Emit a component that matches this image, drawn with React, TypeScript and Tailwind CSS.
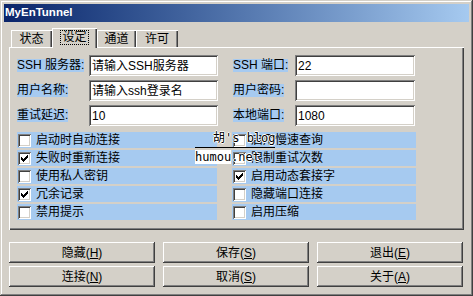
import React from "react";

const FONT = "font-['Liberation_Sans','Noto_Sans_CJK_SC',sans-serif]";
const RAISED =
  "shadow-[inset_-1px_-1px_#404040,inset_1px_1px_#ffffff,inset_-2px_-2px_#808080,inset_2px_2px_#d4d0c8]";
const SUNKEN =
  "shadow-[inset_1px_1px_#808080,inset_-1px_-1px_#ffffff,inset_2px_2px_#404040,inset_-2px_-2px_#d4d0c8]";

function Field({ label, value, labelW, inputW }: { label: string; value: string; labelW: string; inputW: string }) {
  return (
    <div className="flex items-center h-[21px]">
      <div className={`${labelW} flex items-center`}>
        <span className="bg-[#a6caf0] leading-[13px] text-[12px] text-black whitespace-nowrap">{label}</span>
      </div>
      <div className={`${inputW} h-[21px] bg-white ${SUNKEN} flex items-center pl-[3px] text-[12px] text-black whitespace-nowrap`}>
        {value}
      </div>
    </div>
  );
}

function Check({ label, checked }: { label: string; checked?: boolean }) {
  return (
    <div className="h-[16px] bg-[#a6caf0] flex items-center pl-[1px]">
      <div className={`w-[13px] h-[13px] bg-white ${SUNKEN} flex items-center justify-center shrink-0`}>
        {checked && (
          <svg width="7" height="7" viewBox="0 0 7 7" shapeRendering="crispEdges">
            <path d="M0 2h1v3H0zM1 3h1v3H1zM2 4h1v3H2zM3 3h1v3H3zM4 2h1v3H4zM5 1h1v3H5zM6 0h1v3H6z" fill="#000" />
          </svg>
        )}
      </div>
      <span className="ml-[5px] text-[12px] leading-[14px] text-black whitespace-nowrap">{label}</span>
    </div>
  );
}

function Btn({ label, k }: { label: string; k: string }) {
  return (
    <div className={`w-[146px] h-[21px] bg-[#d4d0c8] ${RAISED} flex items-center justify-center text-[12px] text-black whitespace-nowrap`}>
      {label}(<span className="underline">{k}</span>)
    </div>
  );
}

function Tab({ label, w, selected }: { label: string; w: string; selected?: boolean }) {
  if (selected) {
    return (
      <div
        className={`${w} h-[20px] mb-[-1px] relative z-10 bg-[#d4d0c8] shadow-[inset_1px_1px_#ffffff,inset_-1px_0_#404040,inset_-2px_0_#808080] flex items-start justify-center pt-[2px]`}
      >
        <span className="border border-dotted border-black px-[1px] leading-[13px] text-[12px] text-black">{label}</span>
      </div>
    );
  }
  return (
    <div
      className={`${w} h-[17px] bg-[#d4d0c8] shadow-[inset_1px_1px_#ffffff,inset_-1px_0_#404040,inset_-2px_0_#808080] flex items-center justify-center text-[12px] text-black`}
    >
      {label}
    </div>
  );
}

export default function App() {
  return (
    <div
      className={`${FONT} relative w-[473px] h-[296px] bg-[#d4d0c8] p-[4px] shadow-[inset_-1px_-1px_#404040,inset_1px_1px_#d4d0c8,inset_-2px_-2px_#808080,inset_2px_2px_#ffffff] overflow-hidden`}
    >
      <div className="h-[18px] bg-gradient-to-r from-[#0a246a] to-[#a6caf0] flex items-center pl-[1px]">
        <span className="text-white font-bold text-[11.5px] font-['Liberation_Sans',sans-serif]">MyEnTunnel</span>
      </div>

      <div className="px-[5px]">
        <div className="mt-[6px] h-[19px] flex items-end pl-[2px]">
          <Tab label="状态" w="w-[41px]" />
          <Tab label="设定" w="w-[45px]" selected />
          <Tab label="通道" w="w-[39px]" />
          <Tab label="许可" w="w-[42px]" />
        </div>

        <div className="h-[183px] shadow-[inset_1px_1px_#ffffff,inset_-1px_-1px_#404040,inset_-2px_-2px_#808080] pt-[8px] pl-[8px]">
          <div className="flex">
            <div className="flex flex-col gap-[4px] w-[201px]">
              <Field label="SSH 服务器:" value="请输入SSH服务器" labelW="w-[72px]" inputW="w-[129px]" />
              <Field label="用户名称:" value="请输入ssh登录名" labelW="w-[72px]" inputW="w-[129px]" />
              <Field label="重试延迟:" value="10" labelW="w-[72px]" inputW="w-[129px]" />
            </div>
            <div className="flex flex-col gap-[4px] ml-[15px]">
              <Field label="SSH 端口:" value="22" labelW="w-[62px]" inputW="w-[120px]" />
              <Field label="用户密码:" value="" labelW="w-[62px]" inputW="w-[120px]" />
              <Field label="本地端口:" value="1080" labelW="w-[62px]" inputW="w-[120px]" />
            </div>
          </div>

          <div className="flex mt-[6px]">
            <div className="w-[200px] flex flex-col gap-[2px]">
              <Check label="启动时自动连接" />
              <Check label="失败时重新连接" checked />
              <Check label="使用私人密钥" />
              <Check label="冗余记录" checked />
              <Check label="禁用提示" />
            </div>
            <div className="w-[184px] ml-[15px] flex flex-col gap-[2px]">
              <Check label="启用慢速查询" />
              <Check label="限制重试次数" />
              <Check label="启用动态套接字" checked />
              <Check label="隐藏端口连接" />
              <Check label="启用压缩" />
            </div>
          </div>
        </div>

        <div className="mt-[12px] flex flex-col gap-[3px]">
          <div className="flex gap-[8px]">
            <Btn label="隐藏" k="H" />
            <Btn label="保存" k="S" />
            <Btn label="退出" k="E" />
          </div>
          <div className="flex gap-[8px]">
            <Btn label="连接" k="N" />
            <Btn label="取消" k="S" />
            <Btn label="关于" k="A" />
          </div>
        </div>
      </div>

      {/* watermark overlay */}
      <div className="absolute left-[213px] top-[131px] text-[12px] leading-[15px] text-black font-['DejaVu_Sans_Mono','Noto_Sans_CJK_SC',monospace] whitespace-nowrap [text-shadow:1px_0_#fff,-1px_0_#fff,0_1px_#fff,0_-1px_#fff]">
        胡's blog
      </div>
      <div className="absolute left-[195px] top-[147px] w-[80px] h-[1px] bg-black" />
      <div className="absolute left-[195px] top-[150px] text-[12px] leading-[14px] text-black font-['DejaVu_Sans_Mono',monospace] whitespace-nowrap [text-shadow:1px_0_#fff,-1px_0_#fff,0_1px_#fff,0_-1px_#fff]">
        <span className="bg-white">humou</span>.net
      </div>
    </div>
  );
}
